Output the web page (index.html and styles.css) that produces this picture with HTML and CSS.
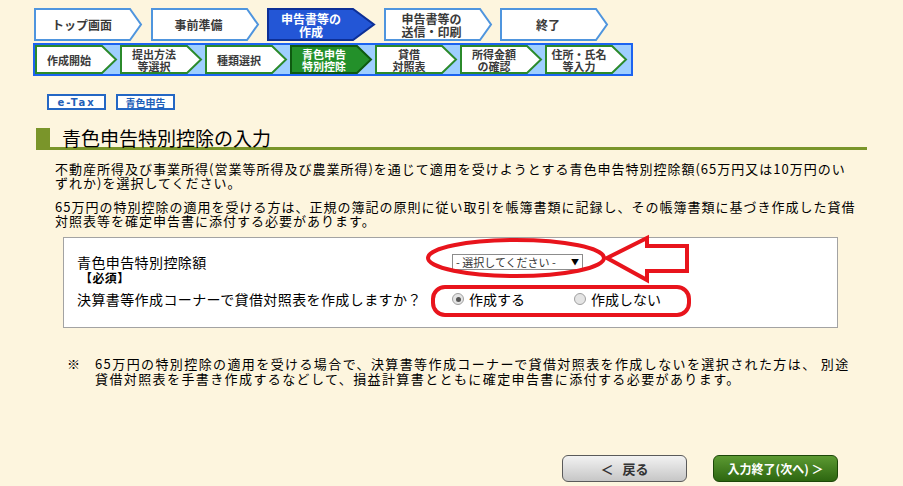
FILE: index.html
```html
<!DOCTYPE html>
<html lang="ja">
<head>
  <meta charset="UTF-8">
  <title>青色申告特別控除の入力</title>
  <link rel="stylesheet" href="styles.css">
</head>
<body>
<div class="page">
  <div class="steps">
    <div class="step">
      <svg width="108" height="33" viewBox="0 0 108 33"><polygon points="1,1 96,1 107,16.5 96,32 1,32"/></svg>
      <span>トップ画面</span>
    </div>
    <div class="step">
      <svg width="108" height="33" viewBox="0 0 108 33"><polygon points="1,1 96,1 107,16.5 96,32 1,32"/></svg>
      <span>事前準備</span>
    </div>
    <div class="step current">
      <svg width="108" height="33" viewBox="0 0 108 33"><polygon points="1,1 86,1 107,16.5 86,32 1,32"/></svg>
      <span>申告書等の<br>作成</span>
    </div>
    <div class="step">
      <svg width="108" height="33" viewBox="0 0 108 33"><polygon points="1,1 96,1 107,16.5 96,32 1,32"/></svg>
      <span>申告書等の<br>送信・印刷</span>
    </div>
    <div class="step">
      <svg width="108" height="33" viewBox="0 0 108 33"><polygon points="1,1 96,1 107,16.5 96,32 1,32"/></svg>
      <span>終了</span>
    </div>
  </div>

  <div class="substeps">
    <div class="sub">
      <svg width="82" height="29" viewBox="0 0 82 29"><polygon points="1,1 67,1 81,14.5 67,28 1,28"/></svg>
      <span>作成開始</span>
    </div>
    <div class="sub">
      <svg width="82" height="29" viewBox="0 0 82 29"><polygon points="1,1 67,1 81,14.5 67,28 1,28"/></svg>
      <span>提出方法<br>等選択</span>
    </div>
    <div class="sub">
      <svg width="82" height="29" viewBox="0 0 82 29"><polygon points="1,1 67,1 81,14.5 67,28 1,28"/></svg>
      <span>種類選択</span>
    </div>
    <div class="sub current">
      <svg width="82" height="29" viewBox="0 0 82 29"><polygon points="1,1 67,1 81,14.5 67,28 1,28"/></svg>
      <span>青色申告<br>特別控除</span>
    </div>
    <div class="sub">
      <svg width="82" height="29" viewBox="0 0 82 29"><polygon points="1,1 67,1 81,14.5 67,28 1,28"/></svg>
      <span>貸借<br>対照表</span>
    </div>
    <div class="sub">
      <svg width="82" height="29" viewBox="0 0 82 29"><polygon points="1,1 67,1 81,14.5 67,28 1,28"/></svg>
      <span>所得金額<br>の確認</span>
    </div>
    <div class="sub">
      <svg width="82" height="29" viewBox="0 0 82 29"><polygon points="1,1 67,1 81,14.5 67,28 1,28"/></svg>
      <span>住所・氏名<br>等入力</span>
    </div>
  </div>

  <div class="badges">
    <span class="badge etax">e-Tax</span>
    <span class="badge">青色申告</span>
  </div>

  <div class="main">
    <h2 class="title">青色申告特別控除の入力</h2>

    <div class="lead">
      <p>不動産所得及び事業所得(営業等所得及び農業所得)を通じて適用を受けようとする青色申告特別控除額(65万円又は10万円のい<br>ずれか)を選択してください。</p>
      <p>65万円の特別控除の適用を受ける方は、正規の簿記の原則に従い取引を帳簿書類に記録し、その帳簿書類に基づき作成した貸借<br>対照表等を確定申告書に添付する必要があります。</p>
    </div>

    <div class="form-box">
      <div class="form-row">
        <div class="label">青色申告特別控除額<span class="req">【必須】</span></div>
        <div class="field">
          <span class="select"><span>- 選択してください -</span><b>▼</b></span>
        </div>
      </div>
      <div class="form-row second">
        <div class="label">決算書等作成コーナーで貸借対照表を作成しますか？</div>
        <div class="field radios">
          <label class="radio checked"><i></i>作成する</label>
          <label class="radio"><i></i>作成しない</label>
        </div>
      </div>
      <svg class="marks" width="775" height="93" viewBox="0 0 775 93">
        <ellipse cx="452" cy="20" rx="88" ry="18"/>
        <polygon points="543,20 583,0 583,8 623,8 623,33 583,33 583,42"/>
        <rect x="369" y="49" width="256" height="28" rx="12"/>
      </svg>
    </div>

    <div class="note">
      <span class="mark">※</span>
      <p>65万円の特別控除の適用を受ける場合で、決算書等作成コーナーで貸借対照表を作成しないを選択された方は、 別途<br>貸借対照表を手書き作成するなどして、損益計算書とともに確定申告書に添付する必要があります。</p>
    </div>

    <div class="buttons">
      <span class="btn back">＜&nbsp;&nbsp;&nbsp;戻る</span>
      <span class="btn next">入力終了(次へ) ＞</span>
    </div>
  </div>
</div>
</body>
</html>
```

FILE: styles.css
```css
body { margin: 0; background: #fdf5de; color: #000; font-family: "Noto Sans CJK JP", "Noto Sans", sans-serif; }
.page { padding: 8px 0 0 34px; }

/* step bar (top row) */
.steps { display: flex; gap: 8.5px; }
.step { display: grid; width: 108px; height: 33px; }
.step svg, .step span { grid-area: 1 / 1; }
.step svg { overflow: visible; }
.step polygon { fill: #fff; stroke: #4f95de; stroke-width: 2; }
.step span {
  width: 96px; display: flex; align-items: center; justify-content: center;
  text-align: center; font-size: 12px; line-height: 13px; font-weight: bold; color: #3a3a3a;
}
.step.current polygon { fill: #2356d6; stroke: #0d2f96; }
.step.current span { width: 88px; color: #fff; }

/* sub steps */
.substeps {
  display: flex; gap: 3px; width: 596px; height: 29px; margin: 2px 0 0 -1px;
  background: #9fceff; border: 2px solid #1c63f0;
}
.sub { display: grid; width: 82px; height: 29px; }
.sub svg, .sub span { grid-area: 1 / 1; }
.sub svg { overflow: visible; }
.sub polygon { fill: #fff; stroke: #2b8a2b; stroke-width: 2; }
.sub span {
  width: 68px; display: flex; align-items: center; justify-content: center;
  text-align: center; font-size: 11px; line-height: 12px; font-weight: bold; color: #3a3a3a;
}
.sub.current polygon { fill: #23902a; stroke: #0e5a10; }
.sub.current span { color: #fff; }

/* badges */
.badges { display: flex; gap: 10px; margin: 18px 0 0 13px; }
.badge {
  display: flex; align-items: center; justify-content: center; box-sizing: border-box;
  width: 59px; height: 16px; background: #fff; border: 2px solid #2467c4;
  font-size: 10px; line-height: 11px; font-weight: bold; color: #1f5fb8;
}
.badge.etax { font-family: "DejaVu Sans", sans-serif; letter-spacing: 2px; }

/* main */
.main { margin-left: 2px; width: 831px; }
.title {
  margin: 18px 0 0; padding-left: 12px; height: 19px;
  border-left: 14px solid #7a952a; border-bottom: 3px solid #7a952a;
  font-size: 19px; line-height: 19px; font-weight: normal; color: #000;
}

.lead { margin-top: 12px; padding-left: 19px; font-size: 13px; line-height: 14px; letter-spacing: 1px; }
.lead p { margin: 0; }
.lead p + p { margin-top: 10px; }

.form-box {
  position: relative; box-sizing: border-box; width: 775px; margin: 9px 0 0 27px;
  padding: 17px 0 21px 13px; background: #fff; border: 1px solid #a3a3a3;
}
.form-row { display: grid; grid-template-columns: 375px 1fr; }
.form-row.second { margin-top: 7px; }
.label { font-size: 14px; line-height: 14px; letter-spacing: 0.4px; }
.req { display: block; margin: 2px 0 0 3px; font-size: 12px; font-weight: bold; }
.field { display: flex; align-items: flex-start; }
.select {
  display: flex; align-items: center; justify-content: space-between; box-sizing: border-box;
  width: 131px; height: 16px; margin-top: -1px; padding: 0 3px;
  border: 1px solid #8c8c8c; background: #fff;
  font-size: 11px; line-height: 14px; color: #333; white-space: nowrap;
}
.select b { font-size: 8px; color: #000; }
.radios { display: flex; }
.radio { display: flex; align-items: center; gap: 5px; font-size: 14px; line-height: 14px; }
.radio:first-child { width: 122px; }
.radio i {
  box-sizing: border-box; width: 12px; height: 12px; border-radius: 50%;
  border: 1px solid #a0a0a0; background: #e4e4e4; display: flex; align-items: center; justify-content: center;
}
.radio.checked i::after { content: ""; width: 5px; height: 5px; border-radius: 50%; background: #555; }

.marks { position: absolute; left: 0; top: 0; overflow: visible; pointer-events: none; }
.marks ellipse, .marks polygon, .marks rect { fill: none; stroke: #e8141c; stroke-width: 4; }

.note { display: flex; margin: 28px 0 0 31px; font-size: 13px; line-height: 15px; letter-spacing: 1.4px; }
.note .mark { width: 28px; flex: none; letter-spacing: 0; }
.note p { margin: 0; }

.buttons { display: flex; gap: 26px; margin: 69px 0 0 526px; }
.btn {
  display: flex; align-items: center; justify-content: center; box-sizing: border-box;
  width: 125px; height: 27px; border-radius: 6px; font-size: 12px; font-weight: bold;
}
.back { background: linear-gradient(#f2f2f2, #c6c6c6); border: 1px solid #5a5a5a; color: #333; font-size: 13px; }
.next { background: linear-gradient(#5c9a32, #2d6610); border: 1px solid #1c4708; color: #fff; }
```
